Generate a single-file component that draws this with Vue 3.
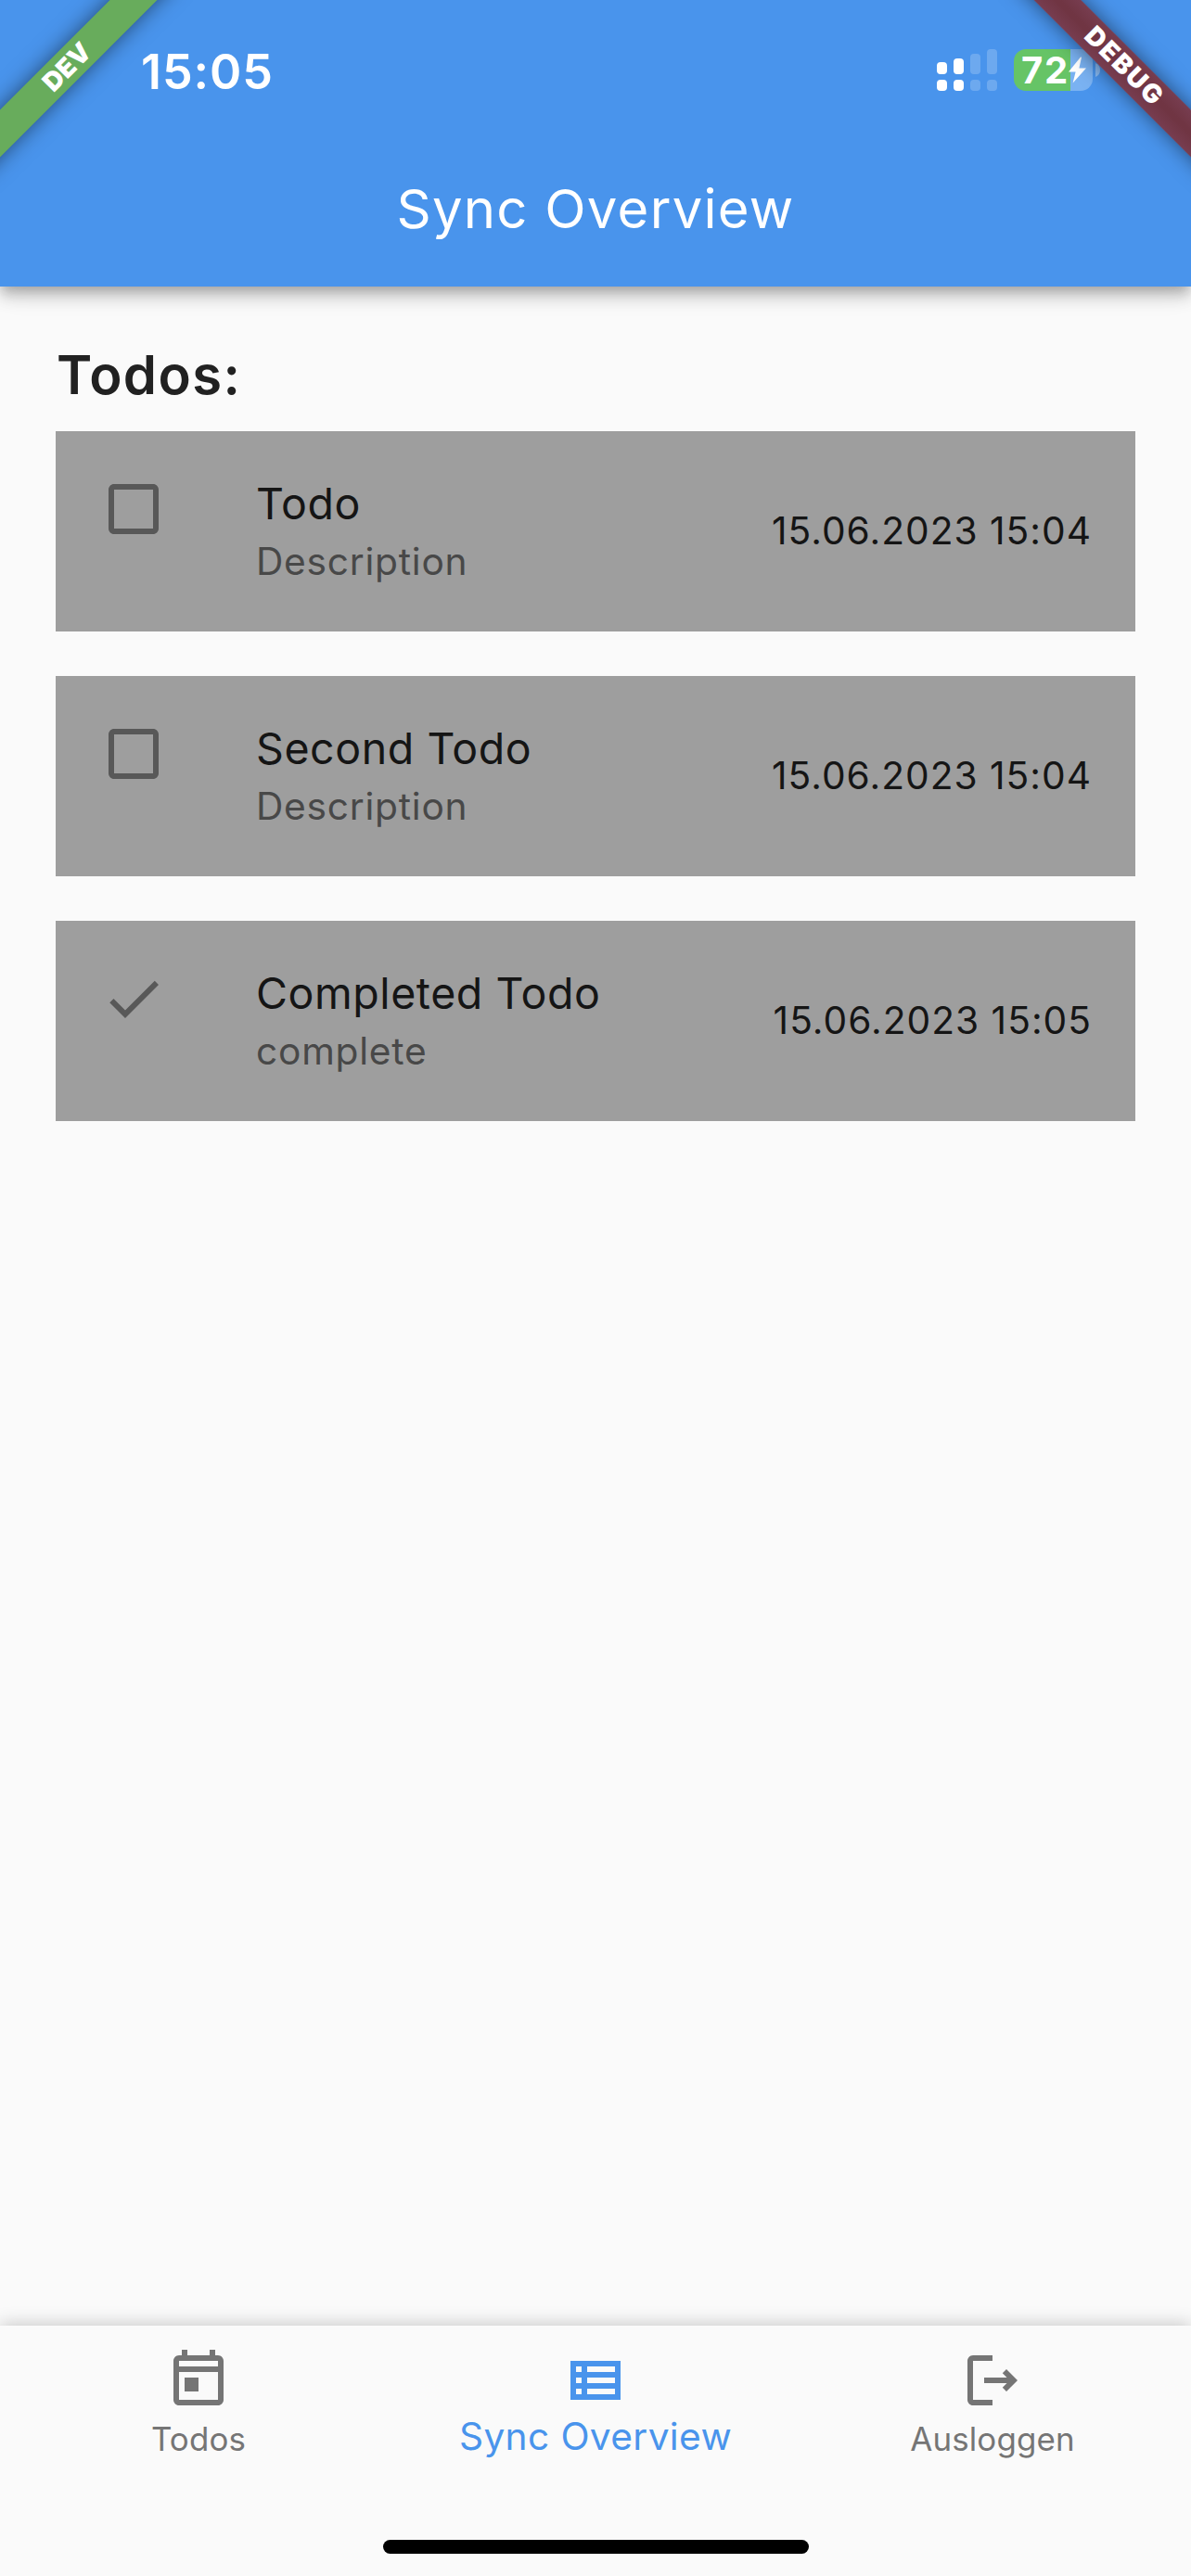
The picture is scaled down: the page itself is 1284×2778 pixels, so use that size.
<script setup>
const todos = [
  { title: 'Todo', note: 'Description', date: '15.06.2023 15:04', done: false },
  { title: 'Second Todo', note: 'Description', date: '15.06.2023 15:04', done: false },
  { title: 'Completed Todo', note: 'complete', date: '15.06.2023 15:05', done: true },
]
const tabs = [
  { label: 'Todos', icon: 'M19 3h-1V1h-2v2H8V1H6v2H5c-1.11 0-2 .9-2 2v14c0 1.1.89 2 2 2h14c1.1 0 2-.9 2-2V5c0-1.1-.9-2-2-2zm0 16H5V9h14v10zm0-12H5V5h14v2zM7 11h5v5H7z' },
  { label: 'Sync Overview', active: true, icon: 'M3 5v14h18V5H3zm4 2v2H5V7h2zm-2 6v-2h2v2H5zm0 2h2v2H5v-2zm14 2H9v-2h10v2zm0-4H9v-2h10v2zm0-4H9V7h10v2z' },
  { label: 'Ausloggen', icon: 'M17 8l-1.41 1.41L17.17 11H9v2h8.17l-1.58 1.58L17 16l4-4-4-4zM5 5h7V3H5c-1.1 0-2 .9-2 2v14c0 1.1.9 2 2 2h7v-2H5V5z' },
]
const bars = [
  { h: 13, on: true },
  { h: 17, on: true },
  { h: 22, on: false },
  { h: 27, on: false },
]
</script>

<template>
  <div class="screen">
    <header class="app-bar">
      <div class="status">
        <span class="time">15:05</span>
        <div class="signal">
          <div v-for="(b, i) in bars" :key="i" class="bar" :class="{ on: b.on }">
            <i :style="{ height: b.h + 'px' }"></i>
            <i class="dot"></i>
          </div>
        </div>
        <div class="battery">
          <span class="level">72</span>
          <svg class="bolt" viewBox="0 0 19 29"><path d="M13 .5 0 16.6h7.600L4.600 28.500 19 12.400h-7.600L14 .8z" fill="#fff" /></svg>
        </div>
        <svg class="nub" viewBox="0 0 5 15"><path d="M0 0q5 2 5 7.500T0 15z" fill="#fff" fill-opacity=".35" /></svg>
      </div>
      <h1>Sync Overview</h1>
    </header>

    <main>
      <h2>Todos:</h2>
      <section class="cards">
        <article v-for="(t, i) in todos" :key="i" class="card">
          <svg class="mark" viewBox="0 0 24 24">
            <path v-if="t.done" d="M9 16.170 4.830 12l-1.420 1.410L9 19 21 7l-1.410-1.410z" />
            <path v-else d="M19 5v14H5V5h14m0-2H5c-1.100 0-2 .9-2 2v14c0 1.100.9 2 2 2h14c1.100 0 2-.9 2-2V5c0-1.100-.9-2-2-2z" />
          </svg>
          <div class="info">
            <div class="title">{{ t.title }}</div>
            <div class="note">{{ t.note }}</div>
          </div>
          <time>{{ t.date }}</time>
        </article>
      </section>
    </main>

    <nav>
      <div class="tabs">
        <div v-for="t in tabs" :key="t.label" class="tab" :class="{ active: t.active }">
          <svg viewBox="0 0 24 24"><path :d="t.icon" fill-rule="evenodd" /></svg>
          <span>{{ t.label }}</span>
        </div>
      </div>
      <div class="home"></div>
    </nav>

    <div class="ribbon dev"><span>DEV</span></div>
    <div class="ribbon debug"><span>DEBUG</span></div>
  </div>
</template>

<style>
body { background: #fafafa; }
</style>

<style scoped>
.screen {
  position: relative;
  display: flex;
  flex-direction: column;
  width: 1284px;
  height: 2778px;
  overflow: hidden;
  background: #fafafa;
  font-family: Inter, "Liberation Sans", sans-serif;
}
.app-bar {
  height: 309px;
  background: #4994ec;
  color: #fff;
  box-shadow: 0 6px 12px -3px rgba(0, 0, 0, .2), 0 12px 15px rgba(0, 0, 0, .14), 0 3px 30px rgba(0, 0, 0, .12);
}
.status { display: flex; height: 141px; }
.time { width: 858px; padding-left: 152px; font-size: 52px; font-weight: 570; line-height: 156px; letter-spacing: .9px; }
.signal { display: flex; gap: 7px; height: 98px; }
.bar { display: flex; flex-direction: column; justify-content: flex-end; gap: 6px; width: 11px; opacity: .2; }
.bar.on { opacity: 1; }
.bar i { border-radius: 4px; background: #fff; }
.bar .dot { height: 12px; }
.battery {
  display: flex;
  width: 85px;
  height: 45px;
  margin: 53px 3px 0 18px;
  border-radius: 13px;
  background: linear-gradient(90deg, #66c466 61px, #7ab2f2 61px);
}
.level { width: 51px; padding-left: 8px; font-size: 40px; font-weight: 650; line-height: 45px; letter-spacing: 1.7px; }
.bolt { width: 19px; height: 29px; margin-top: 8px; }
.nub { width: 5px; height: 15px; margin-top: 68px; }
h1 { margin: 0; font-size: 58px; font-weight: 400; line-height: 168px; letter-spacing: 1.25px; text-align: center; }
main { flex: 1; padding: 36px 60px 0; }
h2 { margin: 0; padding-left: 1px; color: #212121; font-size: 58px; font-weight: 570; line-height: 119px; letter-spacing: 1.4px; }
.cards { display: flex; flex-direction: column; gap: 48px; padding-top: 1px; }
.card { display: flex; height: 216px; padding: 47px 47px 0 48px; box-sizing: border-box; background: #9e9e9e; }
.mark { width: 72px; height: 72px; margin: 1px 96px 0 0; fill: #585858; }
.info { flex: 1; line-height: 62px; }
.title { color: #151515; font-size: 46.5px; letter-spacing: .57px; }
.note { color: #484848; font-size: 40.7px; line-height: 64px; letter-spacing: .75px; }
time { color: #151515; font-size: 40.7px; line-height: 122px; letter-spacing: 1px; }
nav { height: 270px; box-sizing: border-box; background: #fafafa; box-shadow: 0 -2px 18px rgba(0, 0, 0, .2); }
.tabs { display: flex; height: 231px; }
.tab { display: flex; flex: 1; flex-direction: column; align-items: center; padding-top: 23px; color: #757575; font-size: 34.9px; line-height: 54px; letter-spacing: .15px; }
.tab svg { width: 72px; height: 72px; fill: currentColor; }
.tab.active { color: #4994ec; font-size: 40.7px; line-height: 50px; letter-spacing: .35px; }
.home { width: 459px; height: 15px; margin: 0 auto; border-radius: 8px; background: #000; }
.ribbon {
  position: absolute;
  top: 54px;
  width: 300px;
  height: 36px;
  color: #fff;
  font-size: 28px;
  font-weight: 900;
  line-height: 36px;
  text-align: center;
  box-shadow: 0 0 22px rgba(0, 0, 0, .5);
}
.dev { left: -78px; background: #68ac5c; letter-spacing: .3px; transform: rotate(-45deg); }
.debug { right: -78px; background: linear-gradient(#773d50, #703543 45%, #703543 55%, #773d50); line-height: 34px; letter-spacing: 2.1px; transform: rotate(45deg); }
</style>
